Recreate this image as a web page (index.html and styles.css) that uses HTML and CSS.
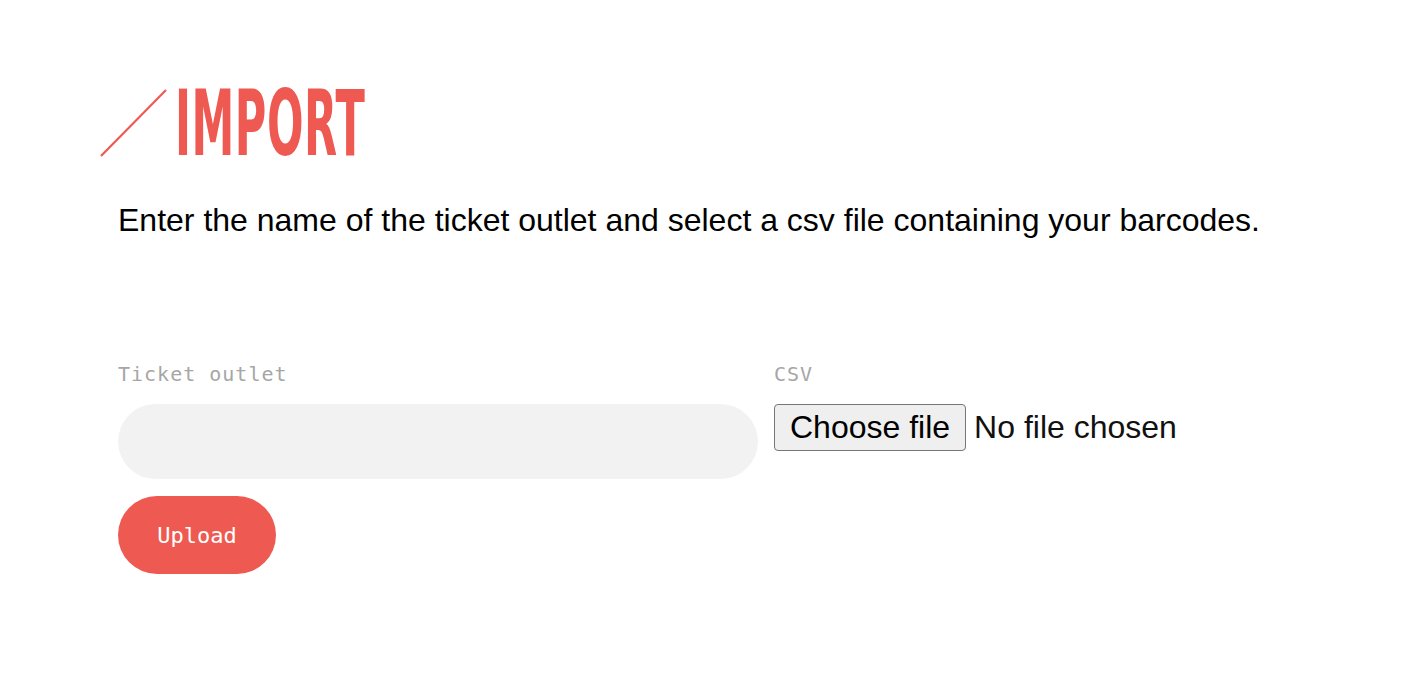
FILE: index.html
```html
<!DOCTYPE html>
<html>
<head>
<meta charset="utf-8">
<link rel="stylesheet" href="styles.css">
</head>
<body>
<main class="page">
  <h1 class="title">
    <svg class="slash" width="68" height="68" viewBox="0 0 68 68"><line x1="1" y1="67" x2="66" y2="1" stroke="#ee5a52" stroke-width="2.2"/></svg>
    <span class="title-text">IMPORT</span>
  </h1>
  <p class="intro">Enter the name of the ticket outlet and select a csv file containing your barcodes.</p>
  <form class="form">
    <div class="fields">
      <label class="field">
        <span class="label">Ticket outlet</span>
        <input class="text-input" type="text">
      </label>
      <label class="field">
        <span class="label">CSV</span>
        <span class="file-picker">
          <input class="file-native" type="file" accept=".csv">
          <span class="file-button">Choose file</span>
          <span class="file-name">No file chosen</span>
        </span>
      </label>
    </div>
    <button class="upload" type="button">Upload</button>
  </form>
</main>
</body>
</html>
```
FILE: styles.css
```css
html, body { margin: 0; padding: 0; background: #fff; }
.page { padding: 89px 0 0 100px; font-family: "Liberation Sans", Arial, sans-serif; }
.title { margin: 0; display: flex; align-items: flex-start; height: 70px; }
.slash { display: block; margin-top: 0; }
.title-text {
  font-family: "DejaVu Sans Condensed", "DejaVu Sans", sans-serif;
  font-weight: bold; font-size: 90px; line-height: 70px; color: #ee5a52;
  display: inline-block; transform: scaleX(0.531); transform-origin: left top;
  margin-left: 7px; letter-spacing: 1px;
}
.intro { margin: 42px 0 0 18px; font-size: 32px; color: #000; line-height: 38px; }
.form { margin: 123px 0 0 18px; }
.fields { display: grid; grid-template-columns: 640px auto; column-gap: 16px; justify-content: start; }
.field { display: flex; flex-direction: column; }
.label { font-family: "DejaVu Sans Mono", monospace; font-size: 20px; letter-spacing: 1px; color: #a6a6a6; line-height: 24px; margin-bottom: 18px; }
.text-input { box-sizing: border-box; width: 640px; height: 75px; border: none; border-radius: 38px; background: #f2f2f2; padding: 0 30px; font-size: 24px; outline: none; margin: 0; }
.file-picker { position: relative; display: flex; align-items: center; gap: 8px; font-size: 32px; color: #111; cursor: pointer; }
.file-native { position: absolute; width: 1px; height: 1px; opacity: 0; overflow: hidden; }
.file-button { box-sizing: border-box; height: 47px; padding: 0 15px; display: flex; align-items: center; background: #efefef; border: 1.5px solid #767676; border-radius: 4px; color: #000; }
.file-name { color: #111; }
.upload { margin-top: 17px; width: 158px; height: 78px; border: none; border-radius: 39px; background: #ee5a52; color: #fff; font-family: "DejaVu Sans Mono", monospace; font-size: 22px; cursor: pointer; padding: 0; }
```
